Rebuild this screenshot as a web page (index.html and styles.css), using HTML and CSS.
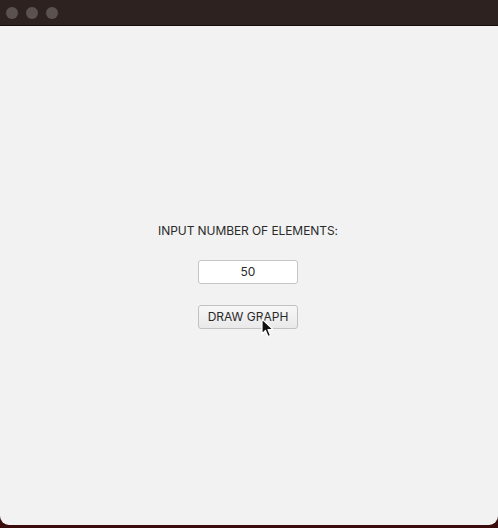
FILE: index.html
```html
<!DOCTYPE html>
<html>
<head>
<meta charset="utf-8">
<link rel="stylesheet" href="styles.css">
</head>
<body>
<div class="window">
  <div class="titlebar">
    <span class="light"></span>
    <span class="light"></span>
    <span class="light"></span>
  </div>
  <div class="content">
    <div class="form">
      <div class="label">INPUT NUMBER OF ELEMENTS:</div>
      <input class="field" type="text" value="50">
      <div class="btn-wrap">
        <button class="btn">DRAW GRAPH</button>
        <svg class="cursor" width="14" height="20" viewBox="0 0 14 20">
          <path d="M1 1 L1 16 L4.5 12.5 L7 18.5 L9.5 17.5 L7 11.5 L12 11.5 Z" fill="#111" stroke="#fff" stroke-width="1.2" stroke-linejoin="round"/>
        </svg>
      </div>
    </div>
  </div>
</div>
</body>
</html>
```
FILE: styles.css
```css
html, body {
  margin: 0;
  padding: 0;
  width: 498px;
  height: 528px;
  background: #3a0c0c;
  overflow: hidden;
}
.window {
  width: 498px;
  height: 525px;
  background: #f2f2f2;
  border-radius: 0 0 9px 9px;
  display: flex;
  flex-direction: column;
  overflow: hidden;
}
.titlebar {
  height: 25px;
  background: #2e2220;
  border-bottom: 1px solid #120c0b;
  display: flex;
  align-items: center;
  gap: 8px;
  padding-left: 6px;
}
.light {
  width: 12px;
  height: 12px;
  border-radius: 50%;
  background: #5b5250;
}
.content {
  flex: 1;
  display: flex;
  align-items: center;
  justify-content: center;
  padding-right: 2px;
}
.form {
  display: flex;
  flex-direction: column;
  align-items: center;
  gap: 21px;
  font-family: Inter, "Liberation Sans", sans-serif;
  font-size: 12px;
  color: #2a2a2a;
}
.label {
  line-height: 16px;
  letter-spacing: -0.08px;
}
.field {
  box-sizing: border-box;
  width: 100px;
  height: 24px;
  border: 1px solid #c4c4c4;
  border-radius: 3px;
  background: #ffffff;
  text-align: center;
  font-family: inherit;
  font-size: 12px;
  color: #2a2a2a;
  padding: 0;
  margin: 0;
  outline: none;
}
.btn-wrap {
  position: relative;
}
.btn {
  box-sizing: border-box;
  width: 100px;
  height: 24px;
  border: 1px solid #c2c2c2;
  border-radius: 3px;
  background: linear-gradient(#f7f7f7, #e9e9e9);
  font-family: inherit;
  font-size: 12px;
  color: #2a2a2a;
  padding: 0;
  margin: 0;
}
.cursor {
  position: absolute;
  left: 63px;
  top: 13px;
}
```
